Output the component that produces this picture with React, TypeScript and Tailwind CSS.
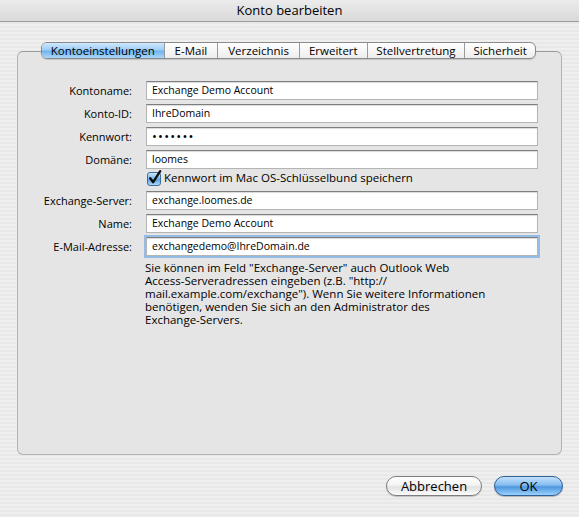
import React from "react";

const tabs = [
  { label: "Kontoeinstellungen", w: "w-[122px]", active: true },
  { label: "E-Mail", w: "w-[54px]" },
  { label: "Verzeichnis", w: "w-[82px]" },
  { label: "Erweitert", w: "w-[68px]" },
  { label: "Stellvertretung", w: "w-[98px]" },
  { label: "Sicherheit", w: "w-[71px]" },
];

function Field({
  label,
  value,
  focused,
  secret,
  className,
}: {
  label: string;
  value: string;
  focused?: boolean;
  secret?: boolean;
  className?: string;
}) {
  return (
    <div className={`flex items-center h-[19px] ${className ?? "mt-[4px]"}`}>
      <div className="w-[115px] text-right pr-[1px] text-[11px] text-black leading-none">{label}</div>
      <div
        className={`ml-[13px] w-[392px] h-[19px] bg-white flex items-center pl-[5px] text-black leading-none border border-[#b4b4b4] border-t-[#7e7e7e] shadow-[inset_0_1px_1px_rgba(0,0,0,0.15)] ${
          secret ? "text-[13px] tracking-[1.2px]" : "text-[10.5px]"
        } ${focused ? "outline outline-[2px] outline-[#93bde6] border-[#6f94bd]" : ""}`}
      >
        {value}
      </div>
    </div>
  );
}

function CheckMark() {
  return (
    <svg width="16" height="16" viewBox="0 0 16 16">
      <defs>
        <linearGradient id="cbg" x1="0" y1="0" x2="0" y2="1">
          <stop offset="0" stopColor="#d6ebfd" />
          <stop offset="0.45" stopColor="#7fb9ee" />
          <stop offset="0.55" stopColor="#5ea3e4" />
          <stop offset="1" stopColor="#b4dcfb" />
        </linearGradient>
      </defs>
      <rect x="1.5" y="2.5" width="13" height="13" rx="2.5" fill="url(#cbg)" stroke="#3d6d9f" />
      <path d="M4.2 8.2 L7.2 12.2 L14.2 1.2" stroke="#0d0d0d" strokeWidth="2.3" fill="none" strokeLinecap="round" strokeLinejoin="round" />
    </svg>
  );
}

export default function App() {
  return (
    <div className="w-[579px] h-[517px] overflow-hidden flex flex-col font-['Open_Sans',sans-serif] bg-[repeating-linear-gradient(180deg,#efefef_0px,#efefef_2px,#e8e8e8_2px,#e8e8e8_4px)]">
      {/* title bar */}
      <div className="h-[22px] flex items-center justify-center border-b border-[#9c9c9c] bg-[linear-gradient(180deg,#ececec,#d9d9d9)] text-[13px] text-black">
        Konto bearbeiten
      </div>

      {/* tabs */}
      <div className="relative z-10 mt-[20px] ml-[41px] flex h-[17px] w-[495px] rounded-[6px] border border-[#8a8a8a] overflow-hidden bg-[linear-gradient(180deg,#ffffff,#ededed)] shadow-[0_1px_1px_rgba(0,0,0,0.15)]">
        {tabs.map((t, i) => (
          <div
            key={t.label}
            className={`${t.w} h-full flex items-center justify-center text-[11.5px] leading-none text-black ${
              i > 0 ? "border-l border-[#9a9a9a]" : ""
            } ${t.active ? "bg-[linear-gradient(180deg,#cfe8fd_0%,#9fcdf5_45%,#72b4ee_55%,#a9d8fb_100%)]" : ""}`}
          >
            {t.label}
          </div>
        ))}
      </div>

      {/* panel */}
      <div className="-mt-[8px] ml-[17px] w-[545px] h-[404px] rounded-[6px] border border-[#b3b3b3] border-t-[#9a9a9a] bg-[#e5e5e5] pt-[29px]">
        <Field label="Kontoname:" value="Exchange Demo Account" className="mt-0" />
        <Field label="Konto-ID:" value="IhreDomain" />
        <Field label="Kennwort:" value="•••••••" secret />
        <Field label="Domäne:" value="loomes" />
        <div className="flex items-center h-[15px] mt-[1px] pl-[128px]">
          <CheckMark />
          <span className="ml-[2px] text-[11.5px] leading-none text-black">Kennwort im Mac OS-Schlüsselbund speichern</span>
        </div>
        <Field label="Exchange-Server:" value="exchange.loomes.de" className="mt-[6px]" />
        <Field label="Name:" value="Exchange Demo Account" />
        <Field label="E-Mail-Adresse:" value="exchangedemo@IhreDomain.de" focused />
        <p className="mt-[5px] ml-[127px] text-[11.5px] leading-[13px] text-black">
          Sie können im Feld "Exchange-Server" auch Outlook Web
          <br />
          Access-Serveradressen eingeben (z.B. "http://
          <br />
          mail.example.com/exchange"). Wenn Sie weitere Informationen
          <br />
          benötigen, wenden Sie sich an den Administrator des
          <br />
          Exchange-Servers.
        </p>
      </div>

      {/* buttons */}
      <div className="mt-[21px] mr-[16px] flex justify-end gap-[12px]">
        <button className="w-[96px] h-[20px] rounded-full border border-[#7d7d7d] bg-[linear-gradient(180deg,#ffffff_0%,#f4f4f4_45%,#e2e2e2_55%,#fbfbfb_100%)] text-[13px] leading-none text-black shadow-[0_1px_1px_rgba(0,0,0,0.2)]">
          Abbrechen
        </button>
        <button className="w-[69px] h-[20px] rounded-full border border-[#2f5f96] bg-[linear-gradient(180deg,#c3e0fb_0%,#84bdf0_45%,#4e97e0_55%,#9ad0fb_100%)] text-[13px] leading-none text-black shadow-[0_1px_1px_rgba(0,0,0,0.25)]">
          OK
        </button>
      </div>
    </div>
  );
}
